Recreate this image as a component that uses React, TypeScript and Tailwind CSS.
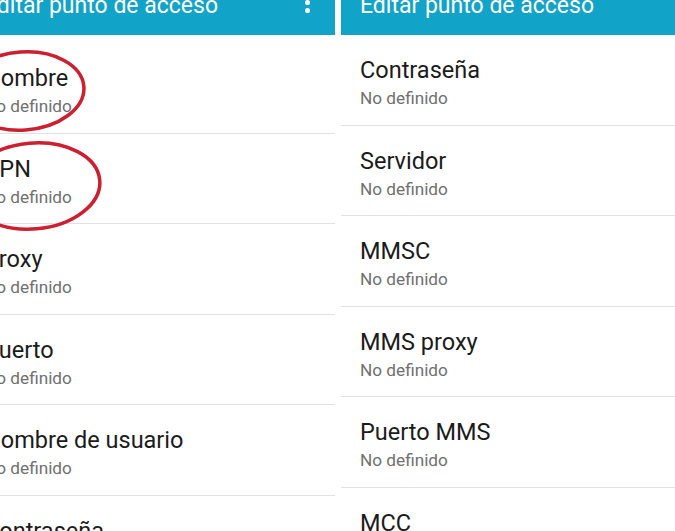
import React from "react";

const leftItems = ["Nombre", "APN", "Proxy", "Puerto", "Nombre de usuario", "Contraseña"];
const rightItems = ["Contraseña", "Servidor", "MMSC", "MMS proxy", "Puerto MMS", "MCC"];

function Header({ menu }: { menu?: boolean }) {
  return (
    <div className="relative h-[35px] shrink-0 overflow-hidden bg-[#11a3c8] pl-[19px] pr-[25px] flex items-start justify-between">
      <span className="mt-[-8px] text-[23px] leading-[27px] text-white whitespace-nowrap">
        Editar punto de acceso
      </span>
      {menu && (
        <div className="flex flex-col items-center gap-[3px] mt-[-8px]">
          <span className="w-[5px] h-[5px] rounded-full bg-white" />
          <span className="w-[5px] h-[5px] rounded-full bg-white" />
          <span className="w-[5px] h-[5px] rounded-full bg-white" />
        </div>
      )}
    </div>
  );
}

function Row({ title }: { title: string }) {
  return (
    <div className="h-[90.6px] shrink-0 border-b border-[#e2e2e2] pl-[19px] pt-[22px]">
      <div className="text-[23.5px] leading-[27px] text-[#1b1b1b] whitespace-nowrap">{title}</div>
      <div className="mt-[4px] text-[17.2px] leading-[20px] text-[#707070] whitespace-nowrap">
        No definido
      </div>
    </div>
  );
}

export default function App() {
  return (
    <div
      className="relative w-[675px] h-[531px] overflow-hidden bg-white flex items-start gap-[6px]"
      style={{ fontFamily: "Roboto, 'Noto Sans', sans-serif" }}
    >
      {/* left phone */}
      <div className="ml-[-35px] w-[370px] shrink-0 flex flex-col">
        <Header menu />
        <div className="pt-2 flex flex-col">
          {leftItems.map((t) => (
            <Row key={t} title={t} />
          ))}
        </div>
      </div>

      {/* right phone */}
      <div className="w-[370px] shrink-0 flex flex-col">
        <Header />
        <div className="flex flex-col">
          {rightItems.map((t) => (
            <Row key={t} title={t} />
          ))}
        </div>
      </div>

      {/* red marks */}
      <svg className="absolute left-0 top-0 pointer-events-none" width="140" height="240">
        <ellipse
          cx="23"
          cy="91"
          rx="61"
          ry="39"
          fill="none"
          stroke="#cc1f2f"
          strokeWidth="3.5"
          transform="rotate(-4 23 91)"
        />
        <ellipse
          cx="33"
          cy="186"
          rx="67"
          ry="43"
          fill="none"
          stroke="#cc1f2f"
          strokeWidth="3.5"
          transform="rotate(-5 33 186)"
        />
      </svg>
    </div>
  );
}
